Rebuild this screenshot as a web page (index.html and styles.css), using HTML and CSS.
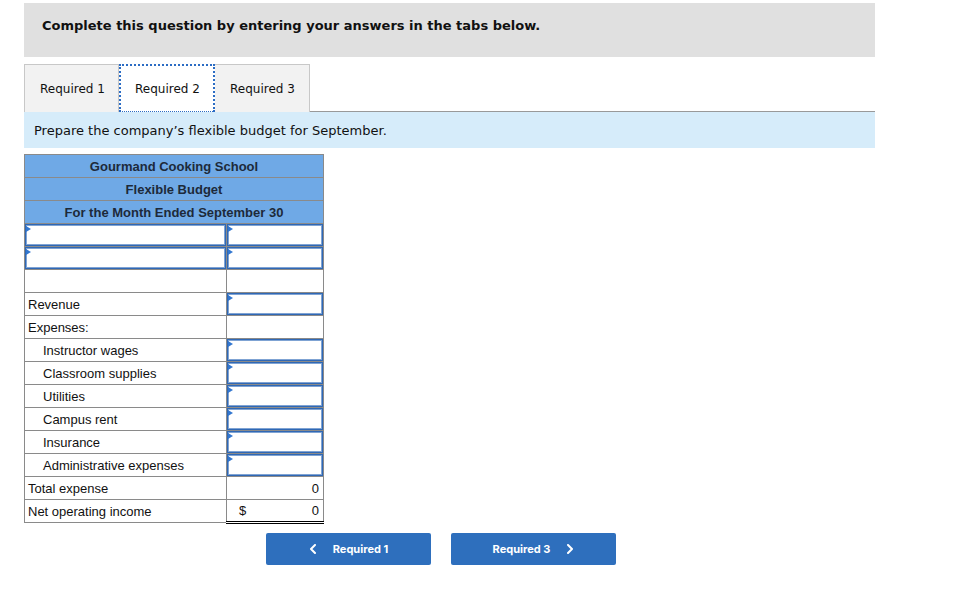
FILE: index.html
```html
<!DOCTYPE html>
<html>
<head>
<meta charset="utf-8">
<link rel="stylesheet" href="styles.css">
</head>
<body>
<div class="page">
  <div class="header">Complete this question by entering your answers in the tabs below.</div>
  <div class="tabs">
    <div class="tab">Required 1</div>
    <div class="tab active">Required 2</div>
    <div class="tab">Required 3</div>
  </div>
  <div class="instruction">Prepare the company’s flexible budget for September.</div>
  <table class="budget">
    <tr><th colspan="2">Gourmand Cooking School</th></tr>
    <tr><th colspan="2">Flexible Budget</th></tr>
    <tr><th colspan="2">For the Month Ended September 30</th></tr>
    <tr><td class="in"><div class="box"></div></td><td class="in"><div class="box"></div></td></tr>
    <tr><td class="in"><div class="box"></div></td><td class="in"><div class="box"></div></td></tr>
    <tr><td></td><td></td></tr>
    <tr><td class="lbl">Revenue</td><td class="in"><div class="box"></div></td></tr>
    <tr><td class="lbl">Expenses:</td><td></td></tr>
    <tr><td class="lbl ind">Instructor wages</td><td class="in"><div class="box"></div></td></tr>
    <tr><td class="lbl ind">Classroom supplies</td><td class="in"><div class="box"></div></td></tr>
    <tr><td class="lbl ind">Utilities</td><td class="in"><div class="box"></div></td></tr>
    <tr><td class="lbl ind">Campus rent</td><td class="in"><div class="box"></div></td></tr>
    <tr><td class="lbl ind">Insurance</td><td class="in"><div class="box"></div></td></tr>
    <tr><td class="lbl ind">Administrative expenses</td><td class="in"><div class="box"></div></td></tr>
    <tr><td class="lbl">Total expense</td><td class="num">0</td></tr>
    <tr><td class="lbl">Net operating income</td><td class="num dbl"><div class="split"><span>$</span><span>0</span></div></td></tr>
  </table>
  <div class="nav">
    <div class="btn"><svg class="chev" width="8" height="10" viewBox="0 0 8 10"><path d="M6 1 L2 5 L6 9" fill="none" stroke="#fff" stroke-width="2" stroke-linecap="round" stroke-linejoin="round"/></svg><span>Required 1</span></div>
    <div class="btn"><span>Required 3</span><svg class="chev" width="8" height="10" viewBox="0 0 8 10"><path d="M2 1 L6 5 L2 9" fill="none" stroke="#fff" stroke-width="2" stroke-linecap="round" stroke-linejoin="round"/></svg></div>
  </div>
</div>
</body>
</html>
```
FILE: styles.css
```css
html, body { margin: 0; padding: 0; background: #fff; }
.page { padding: 3px 0 0 24px; width: 851px; }
.header {
  background: #e0e0e0;
  height: 54px;
  box-sizing: border-box;
  padding: 15px 0 0 18px;
  font-family: "DejaVu Sans", Verdana, sans-serif;
  font-weight: bold;
  font-size: 13px;
  color: #111;
}
.tabs {
  display: flex;
  margin-top: 7px;
  border-bottom: 1px solid #999;
  height: 47px;
}
.tab {
  box-sizing: border-box;
  height: 48px;
  padding: 17px 0 0 15px;
  background: #f2f2f2;
  border: 1px solid #c8c8c8;
  border-bottom: none;
  font-family: "DejaVu Sans", Verdana, sans-serif;
  font-size: 12px;
  color: #111;
  width: 95px;
}
.tab + .tab { border-left: none; }
.tab.active {
  background: #fff;
  border: 1px dotted #2b6cc4;
  border-width: 2px 2px 1px 2px;
  height: 48px;
  width: 96px;
  padding: 16px 0 0 14px;
  position: relative;
  z-index: 1;
}
.instruction {
  background: #d6ecfa;
  height: 36px;
  box-sizing: border-box;
  padding: 11px 0 0 10px;
  font-family: "DejaVu Sans", Verdana, sans-serif;
  font-size: 13px;
  color: #111;
}
.budget {
  margin-top: 6px;
  border-collapse: collapse;
  width: 300px;
  font-family: "Liberation Sans", Arial, sans-serif;
  font-size: 13px;
  color: #111;
}
.budget th, .budget td {
  border: 1px solid #8a8a8a;
  height: 23px;
  padding: 0;
  box-sizing: border-box;
}
.budget th {
  background: #6fa9e6;
  font-weight: bold;
  text-align: center;
  color: #1d2a3a;
}
.budget td:first-child { width: 202px; }
.budget td.lbl { padding-left: 3px; }
.budget td.ind { padding-left: 18px; }
.budget td.in { position: relative; }
.box {
  position: absolute;
  inset: 0;
  border: 1px solid #2f68b5;
  box-shadow: inset 0 0 0 1px #7fa3d3;
}
.box::before {
  content: "";
  position: absolute;
  left: 0;
  top: 1px;
  border-left: 5px solid #3277d0;
  border-top: 3px solid transparent;
  border-bottom: 3px solid transparent;
}
.budget td.num { text-align: right; padding-right: 4px; }
.budget td.dbl { border-bottom: 3px double #000; }
.split {
  display: flex;
  justify-content: space-between;
  padding-left: 12px;
}
.nav {
  display: flex;
  gap: 20px;
  margin: 9px 0 0 242px;
}
.btn {
  width: 165px;
  height: 32px;
  background: #2e6fbd;
  border-radius: 2px;
  color: #fff;
  display: flex;
  align-items: center;
  justify-content: center;
  gap: 16px;
  font-family: Inter, Roboto, sans-serif;
  font-weight: bold;
  font-size: 11px;
}
.chev { display: block; }
```
